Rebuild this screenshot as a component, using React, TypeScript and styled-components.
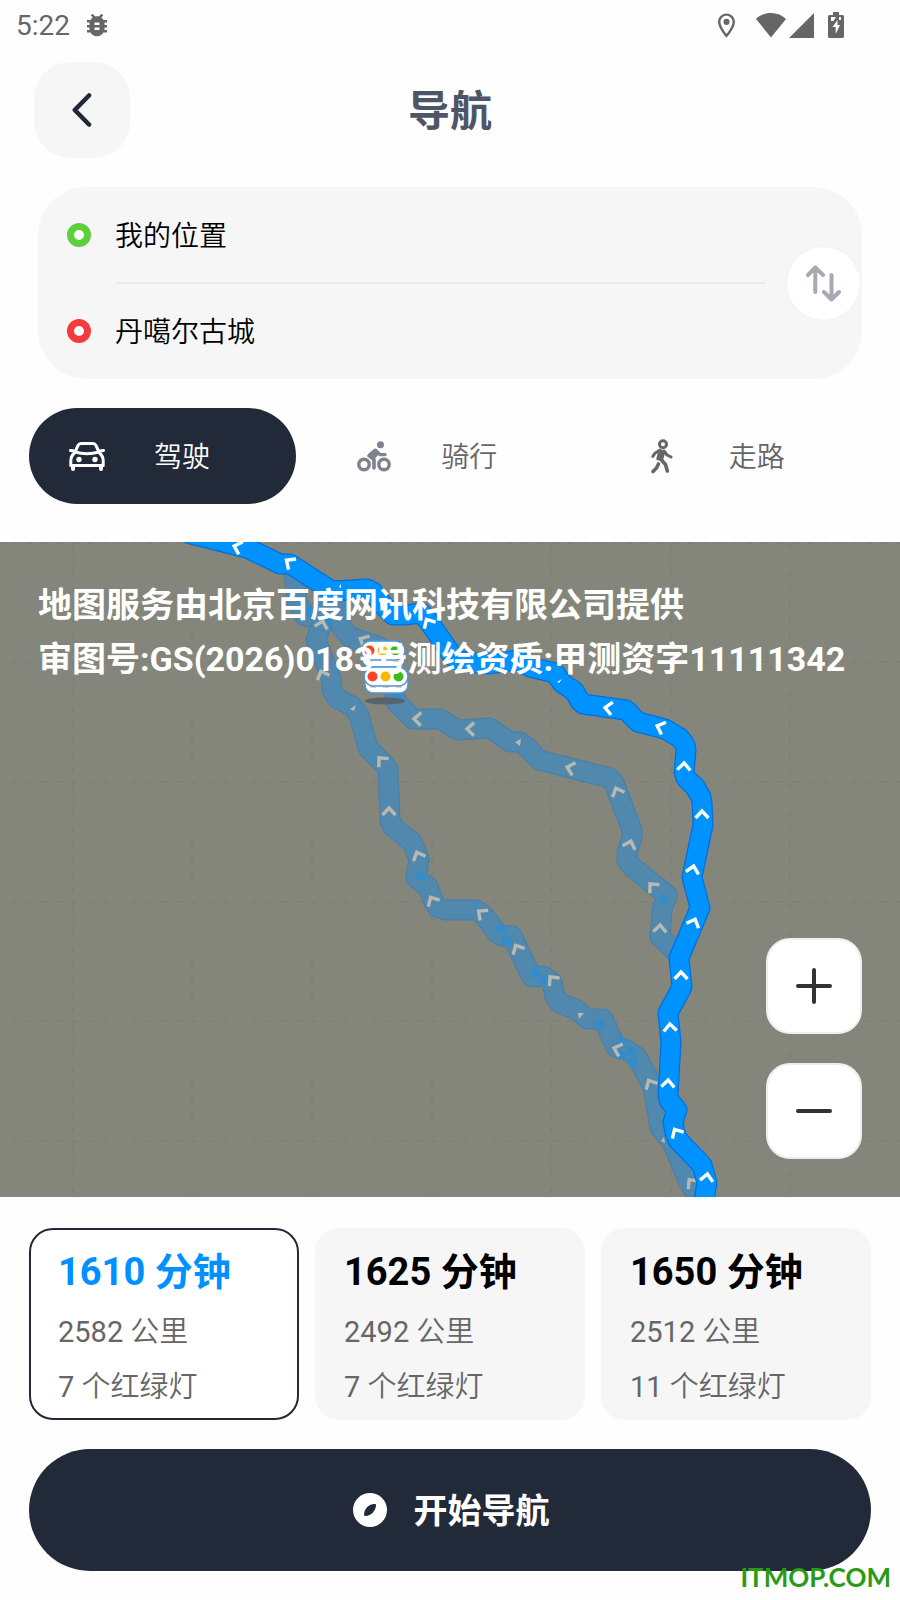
import React, { useState } from "react";
import styled, { createGlobalStyle } from "styled-components";
import { MdBugReport, MdOutlineLocationOn } from "react-icons/md";

const ink = "#222938";
const grey = "#666666";
const panel = "#f6f6f6";

const GlobalStyle = createGlobalStyle`
  *, *::before, *::after { box-sizing: border-box; }
  body {
    margin: 0;
    background: #fefefe;
    font-family: Roboto, "Noto Sans CJK SC", sans-serif;
  }
  button {
    margin: 0;
    padding: 0;
    border: 0;
    background: none;
    font: inherit;
    color: inherit;
    cursor: pointer;
  }
  svg { display: block; }
`;

const Page = styled.div`
  position: relative;
  display: flex;
  flex-direction: column;
  min-height: 100vh;
`;

const StatusBar = styled.div`
  display: flex;
  align-items: center;
  justify-content: space-between;
  height: 50px;
  padding: 0 56px 0 16px;
  color: ${grey};
  font-size: 28px;
`;

const StatusGroup = styled.div<{ $gap: number }>`
  display: flex;
  align-items: center;
  gap: ${(p) => p.$gap}px;
`;

const SignalPair = styled.div`
  display: flex;
  gap: 3px;
  margin: 0 14px 0 15px;
`;

const Header = styled.header`
  display: grid;
  grid-template-columns: 96px 1fr 96px;
  align-items: center;
  padding: 12px 34px 29px;
`;

const BackButton = styled.button`
  display: flex;
  align-items: center;
  justify-content: center;
  height: 96px;
  border-radius: 36px;
  background: ${panel};
  color: ${ink};
`;

const Title = styled.h1`
  margin: 0;
  padding-top: 4px;
  text-align: center;
  font-size: 42px;
  line-height: 60px;
  font-weight: 700;
  color: #4e5566;
`;

const Places = styled.section`
  display: flex;
  align-items: center;
  gap: 21px;
  margin: 0 38px;
  padding: 0 2px 0 29px;
  border-radius: 48px;
  background: ${panel};
`;

const PlaceList = styled.ul`
  flex: 1;
  margin: 0;
  padding: 0;
  list-style: none;
`;

const Place = styled.li`
  display: flex;
  align-items: center;
  gap: 24px;
  height: 96px;
`;

const Dot = styled.span<{ $color: string }>`
  width: 24px;
  height: 24px;
  border: 7px solid ${(p) => p.$color};
  border-radius: 50%;
  background: #ffffff;
`;

const PlaceName = styled.span<{ $divided?: boolean }>`
  flex: 1;
  height: 96px;
  padding-top: 2px;
  font-size: 28px;
  line-height: 96px;
  font-weight: 350;
  color: #000000;
  box-shadow: ${(p) => (p.$divided ? "0 -1px #ebebeb, inset 0 1px #ebebeb" : "none")};
`;

const SwapButton = styled.button`
  display: flex;
  align-items: center;
  justify-content: center;
  width: 73px;
  height: 73px;
  border-radius: 50%;
  background: #ffffff;
  box-shadow: 0 0 3px rgba(0, 0, 0, 0.04);
  color: #a7aab2;
`;

const Modes = styled.nav`
  display: grid;
  grid-template-columns: repeat(3, 1fr);
  gap: 20px;
  padding: 29px 29px 38px;
`;

const Mode = styled.button<{ $active: boolean }>`
  display: flex;
  align-items: center;
  gap: 49px;
  height: 96px;
  padding-left: 40px;
  border-radius: 48px;
  background: ${(p) => (p.$active ? ink : "transparent")};
  color: ${(p) => (p.$active ? "#ffffff" : grey)};
  font-size: 28px;
  line-height: 40px;
  font-weight: 350;
`;

const ModeName = styled.span`
  padding-top: 3px;
`;

const ModeIcon = styled.span`
  display: flex;
  justify-content: center;
  width: 36px;
`;

const MapArea = styled.section`
  position: relative;
  flex: 1;
  display: flex;
  flex-direction: column;
  justify-content: space-between;
  min-height: 480px;
  padding: 36px 38px 38px;
  overflow: hidden;
  background: #84867b;
`;

const MapDrawing = styled.svg`
  position: absolute;
  inset: 0;
  width: 100%;
  height: 100%;
`;

const MapNotice = styled.p`
  position: relative;
  margin: 0;
  font-size: 34px;
  line-height: 54px;
  font-weight: 700;
  color: #ffffff;
`;

const ZoomControls = styled.div`
  position: relative;
  align-self: flex-end;
  display: grid;
  gap: 29px;
`;

const ZoomButton = styled.button`
  display: flex;
  align-items: center;
  justify-content: center;
  width: 96px;
  height: 96px;
  border: 2px solid #efefef;
  border-radius: 24px;
  background: #ffffff;
  color: #333333;
`;

const Options = styled.section`
  display: grid;
  grid-template-columns: repeat(3, 1fr);
  gap: 16px;
  padding: 31px 29px 29px;
`;

const Option = styled.button<{ $active: boolean }>`
  display: flex;
  flex-direction: column;
  align-items: flex-start;
  height: 192px;
  padding: 10px 27px 0;
  border: 2px solid ${(p) => (p.$active ? ink : panel)};
  border-radius: 24px;
  background: ${(p) => (p.$active ? "#ffffff" : panel)};
`;

const Duration = styled.strong<{ $active: boolean }>`
  font-size: 38px;
  line-height: 65px;
  font-weight: 700;
  color: ${(p) => (p.$active ? "#0090ff" : "#000000")};
`;

const Detail = styled.span`
  font-size: 29px;
  line-height: 55px;
  font-weight: 350;
  color: ${grey};
`;

const Figure = styled.span`
  font-weight: 400;
`;

const StartButton = styled.button`
  display: flex;
  align-items: center;
  justify-content: center;
  gap: 27px;
  height: 122px;
  margin: 0 29px 29px;
  padding-left: 2px;
  border-radius: 61px;
  background: ${ink};
  color: #ffffff;
  font-size: 34px;
  line-height: 50px;
  font-weight: 700;
`;

const StartLabel = styled.span`
  padding-top: 2px;
`;

const SiteMark = styled.span`
  position: absolute;
  right: 9px;
  bottom: 6px;
  font-family: Lato, sans-serif;
  font-size: 26px;
  line-height: 34px;
  font-weight: 700;
  color: #2a9a14;
`;

const line = {
  fill: "none",
  stroke: "currentColor",
  strokeLinecap: "round" as const,
  strokeLinejoin: "round" as const,
};

const WifiIcon = () => (
  <svg width="30" height="25" viewBox="0 0 30 25" fill="currentColor">
    <path d="M15 24.500 0 6C4 2.200 9 0 15 0s11 2.200 15 6Z" />
  </svg>
);

const SignalIcon = () => (
  <svg width="25" height="25" viewBox="0 0 25 25" fill="currentColor">
    <path d="M25 0v25H0Z" />
  </svg>
);

const BatteryIcon = () => (
  <svg width="16" height="27" viewBox="0 0 16 27">
    <path d="M5 0h6v3h3.500Q16 3 16 4.500v20Q16 26 14.500 26h-13Q0 26 0 24.500v-20Q0 3 1.500 3H5Z" fill="currentColor" />
    <path d="M3 5h5L5.500 9H3ZM11 5h2v3h-2Z" fill="#ffffff" />
    <path d="M9.500 8 4.500 15h3.200v7l4.300-9H9.500Z" fill="#ffffff" />
  </svg>
);

const BackIcon = () => (
  <svg width="20" height="34" viewBox="0 0 20 34" {...line} strokeWidth="4.600">
    <path d="M17 2.500 2.800 17 17 31.500" />
  </svg>
);

const SwapIcon = () => (
  <svg width="35" height="37" viewBox="0 0 35 37" {...line} strokeWidth="4">
    <path d="M9.300 27V2.500M2 10l7.300-7.500L17 10M25.500 10v24.500M18 27l7.500 7.500L33 27" />
  </svg>
);

const CarIcon = () => (
  <svg width="36" height="29" viewBox="0 0 36 29" {...line} strokeWidth="3">
    <path d="M6 10 9 3.500Q10 1.500 12 1.500h12q2 0 3 2L30 10Q18 13.500 6 10ZM1.500 8.500l4 .5M34.500 8.500l-4 .5" />
    <path d="M5.500 11Q1.800 14 1.800 19v4.500h32.400V19q0-5-3.700-8" />
    <path d="M4 24v3M32 24v3" strokeWidth="4" />
    <circle cx="10" cy="17.500" r="2.700" fill="currentColor" stroke="none" />
    <circle cx="26" cy="17.500" r="2.700" fill="currentColor" stroke="none" />
  </svg>
);

const BikeIcon = () => (
  <svg width="34" height="31" viewBox="0 0 34 31" {...line} color="#7e828e">
    <circle cx="7" cy="23.500" r="5.200" strokeWidth="3.400" />
    <circle cx="27" cy="23.500" r="5.200" strokeWidth="3.400" />
    <circle cx="23.500" cy="3.700" r="3.500" fill="currentColor" stroke="none" />
    <path d="M18 9.500 12 14.700l5 4V27" strokeWidth="3.600" />
    <path d="m19 9.500 4 4.200h5" strokeWidth="3.200" />
    <path d="m12 14 6-5 4 3-5.500 6Z" fill="currentColor" strokeWidth="1.500" />
  </svg>
);

const WalkIcon = () => (
  <svg width="22" height="35" viewBox="0 0 22 35" {...line} strokeWidth="3">
    <circle cx="12" cy="5.200" r="3.500" />
    <path d="m8.500 12 4.500.500-2 8-4.500-.5Z" fill="currentColor" strokeWidth="2.500" />
    <path d="M1.800 17.500 4 14.200 9 11M13 12l3 4 4 2" />
    <path d="m9.500 20 5 5.500 1.800 6.500M7.500 25l-2 4-3.500 3.500" strokeWidth="3.600" />
  </svg>
);

const ZoomIcon = ({ plus }: { plus?: boolean }) => (
  <svg width="36" height="36" viewBox="0 0 36 36" {...line} strokeWidth="4">
    <path d={plus ? "M2 18h32M18 2v32" : "M2 18h32"} />
  </svg>
);

const CompassIcon = () => (
  <svg width="34" height="34" viewBox="0 0 34 34">
    <circle cx="17" cy="17" r="17" fill="#ffffff" />
    <path d="M21.500 11Q23.500 10.500 23 12.500C22.500 18 18.500 22.500 12.500 23Q11 23 11 21.500C11.500 15.500 15 11.500 21.500 11Z" fill={ink} />
  </svg>
);

const mainRoute =
  "M187 533 247 548 280 564 290 564 332 591 367 589 373 592 383 605 393 615 405 615 421 613 429 622 452 655 458 661 488 664 518 660 530 667 555 673 562 683 574 691 580 701 583 704 626 710 638 722 665 729 680 738 685 745 686 750 684 772 686 778 695 787 701 797 702 803 703 825 692 877 700 908 679 958 682 987 668 1013 671 1043 668 1095 669 1100 677 1110 673 1122 675 1133 678 1140 702 1165 707 1183 703 1205";

const westRoute =
  "M331 590 322 623 316 640 331 678 332 690 337 698 353 707 359 715 368 748 385 765 388 770 390 820 393 827 412 842 419 859 416 878 428 887 433 900 437 907 445 910 476 910 483 915 490 923 497 933 502 936 512 936 532 977 543 976 552 982 555 997 560 1003 577 1010 587 1019 603 1019 616 1047 625 1049 637 1057 653 1087 660 1128 672 1142 688 1180 702 1205";

const eastRoute =
  "M339 590 341 626 350 637 380 647 390 663 395 697 397 703 413 719 440 719 458 730 490 728 510 742 520 742 528 748 539 760 610 778 614 783 632 830 632 837 627 853 627 860 632 867 667 895 662 910 660 937 680 956";

const spurRoute = "M294 570 297 602 305 616 324 620";

type Arrow = [x: number, y: number, angle: number];

const mainArrows: Arrow[] = [
  [237, 547, -72], [289, 562, -55], [384, 603, -45], [428, 622, -30], [516, 660, -95],
  [608, 708, -82], [660, 727, -70], [684, 766, 3], [702, 814, 0], [693, 869, 12],
  [694, 922, 22], [681, 975, 0], [670, 1027, -4], [668, 1083, 3], [676, 1132, -30], [707, 1177, 8],
];

const faintArrows: Arrow[] = [
  [322, 624, 15], [363, 640, -62], [322, 674, -22], [381, 760, -42], [389, 811, 0],
  [418, 855, -22], [417, 719, -88], [470, 729, -88], [570, 768, -75], [617, 791, -22],
  [630, 844, 18], [652, 886, -42], [660, 928, 3], [432, 900, -30], [481, 913, -52],
  [517, 948, -28], [552, 979, -38], [617, 1049, -72], [650, 1083, -28], [691, 1182, -38],
];

const overlaps: Arrow[] = [
  [421, 876, 18], [501, 929, 0], [507, 941, 0], [535, 973, -25], [544, 981, 30], [599, 1024, -20],
  [621, 1042, 25], [632, 1051, 0], [622, 1055, 0], [633, 1062, -10], [663, 899, 40], [397, 698, 20],
  [309, 612, 30], [327, 621, 10],
];

const gridX = [73, 192, 312, 432, 551, 671, 790];
const gridY = [543, 662, 782, 902, 1021, 1141];

const RouteLine = ({ d, edge, fill }: { d: string; edge: string; fill: string }) => (
  <g fill="none" strokeLinejoin="round">
    <path d={d} stroke={edge} strokeWidth="21" />
    <path d={d} stroke={fill} strokeWidth="18.500" />
  </g>
);

const Arrows = ({ items, color }: { items: Arrow[]; color: string }) => (
  <g fill="none" stroke={color} strokeWidth="3.400">
    {items.map(([x, y, angle]) => (
      <path key={`${x}-${y}`} d="M-6.500 4 0-3 6.500 4" transform={`translate(${x} ${y}) rotate(${angle})`} />
    ))}
  </g>
);

const TrafficLight = ({ x, y }: { x: number; y: number }) => (
  <g transform={`translate(${x} ${y})`}>
    <rect x="1" y="7" width="43" height="19" rx="8" fill="#ffffff" stroke="#4d96d6" strokeWidth="1.500" />
    <path d="M6 20h6M19 20h6M32 20h6" stroke="#d8c5a4" strokeWidth="1.500" />
    <rect x="0" y="0" width="44" height="19" rx="9.500" fill="#ffffff" stroke="#4d96d6" strokeWidth="1.500" />
    <circle cx="8.500" cy="9.500" r="5" fill="#ff4128" />
    <circle cx="21.500" cy="9.500" r="5" fill="#ffb700" />
    <circle cx="34.500" cy="9.500" r="5" fill="#3cb91b" />
  </g>
);

const RouteMap = () => (
  <MapDrawing viewBox="0 542 900 655" preserveAspectRatio="xMidYMid slice" aria-hidden="true">
    <g stroke="#7c8076" strokeWidth="1.500" strokeDasharray="6 9">
      {gridX.map((x) => <path key={x} d={`M${x} 542V1197`} />)}
      {gridY.map((y) => <path key={y} d={`M0 ${y}H900`} strokeDashoffset="3" />)}
    </g>
    <RouteLine d={spurRoute} edge="#4a7fac" fill="#5189ae" />
    <RouteLine d={westRoute} edge="#4a7fac" fill="#5189ae" />
    <RouteLine d={eastRoute} edge="#4a7fac" fill="#5189ae" />
    <path d="M478 900 473 920" stroke="#2f8cd0" />
    <g fill="#338bca">
      {overlaps.map(([x, y, angle]) => (
        <rect key={`${x}-${y}`} x="-4.500" y="-4.500" width="9" height="9" transform={`translate(${x} ${y}) rotate(${angle})`} />
      ))}
    </g>
    <Arrows items={faintArrows} color="#bab9af" />
    <g fill="#bab9af">
      <path d="m350 709 6-4-2 6ZM515 742l6-3-1 7ZM578 1013h6l-5 6ZM661 1141l3-4 1 6Z" />
    </g>
    <RouteLine d={mainRoute} edge="#006fdc" fill="#0092ff" />
    <path d="m339 587 2-3v4ZM557 682l5-3-3 4Z" fill="#ffffff" />
    <Arrows items={mainArrows} color="#ffffff" />
    <ellipse cx="385" cy="701" rx="20" ry="3.500" fill="#56646b" />
    <TrafficLight x={361} y={641} />
    <TrafficLight x={364} y={667} />
  </MapDrawing>
);

const modes = [
  { name: "驾驶", Icon: CarIcon },
  { name: "骑行", Icon: BikeIcon },
  { name: "走路", Icon: WalkIcon },
];

const options = [
  { minutes: 1610, distance: 2582, lights: 7 },
  { minutes: 1625, distance: 2492, lights: 7 },
  { minutes: 1650, distance: 2512, lights: 11 },
];

export default function App() {
  const [mode, setMode] = useState(0);
  const [option, setOption] = useState(0);
  const [places, setPlaces] = useState(["我的位置", "丹噶尔古城"]);

  return (
    <>
      <GlobalStyle />
      <Page>
        <StatusBar>
          <StatusGroup $gap={12}>
            <span>5:22</span>
            <MdBugReport size={30} />
          </StatusGroup>
          <StatusGroup $gap={0}>
            <MdOutlineLocationOn size={29} />
            <SignalPair>
              <WifiIcon />
              <SignalIcon />
            </SignalPair>
            <BatteryIcon />
          </StatusGroup>
        </StatusBar>

        <Header>
          <BackButton aria-label="返回"><BackIcon /></BackButton>
          <Title>导航</Title>
        </Header>

        <Places>
          <PlaceList>
            <Place>
              <Dot $color="#5dd13b" />
              <PlaceName>{places[0]}</PlaceName>
            </Place>
            <Place>
              <Dot $color="#f53a3c" />
              <PlaceName $divided>{places[1]}</PlaceName>
            </Place>
          </PlaceList>
          <SwapButton aria-label="交换" onClick={() => setPlaces([places[1], places[0]])}>
            <SwapIcon />
          </SwapButton>
        </Places>

        <Modes>
          {modes.map(({ name, Icon }, i) => (
            <Mode key={name} $active={i === mode} aria-pressed={i === mode} onClick={() => setMode(i)}>
              <ModeIcon><Icon /></ModeIcon>
              <ModeName>{name}</ModeName>
            </Mode>
          ))}
        </Modes>

        <MapArea>
          <RouteMap />
          <MapNotice>
            地图服务由北京百度网讯科技有限公司提供
            <br />
            审图号:GS(2026)0183号测绘资质:甲测资字11111342
          </MapNotice>
          <ZoomControls>
            <ZoomButton aria-label="放大"><ZoomIcon plus /></ZoomButton>
            <ZoomButton aria-label="缩小"><ZoomIcon /></ZoomButton>
          </ZoomControls>
        </MapArea>

        <Options>
          {options.map((o, i) => (
            <Option key={o.minutes} $active={i === option} aria-pressed={i === option} onClick={() => setOption(i)}>
              <Duration $active={i === option}>{o.minutes} 分钟</Duration>
              <Detail><Figure>{o.distance}</Figure> 公里</Detail>
              <Detail><Figure>{o.lights}</Figure> 个红绿灯</Detail>
            </Option>
          ))}
        </Options>

        <StartButton>
          <CompassIcon />
          <StartLabel>开始导航</StartLabel>
        </StartButton>
        <SiteMark>ITMOP.COM</SiteMark>
      </Page>
    </>
  );
}
